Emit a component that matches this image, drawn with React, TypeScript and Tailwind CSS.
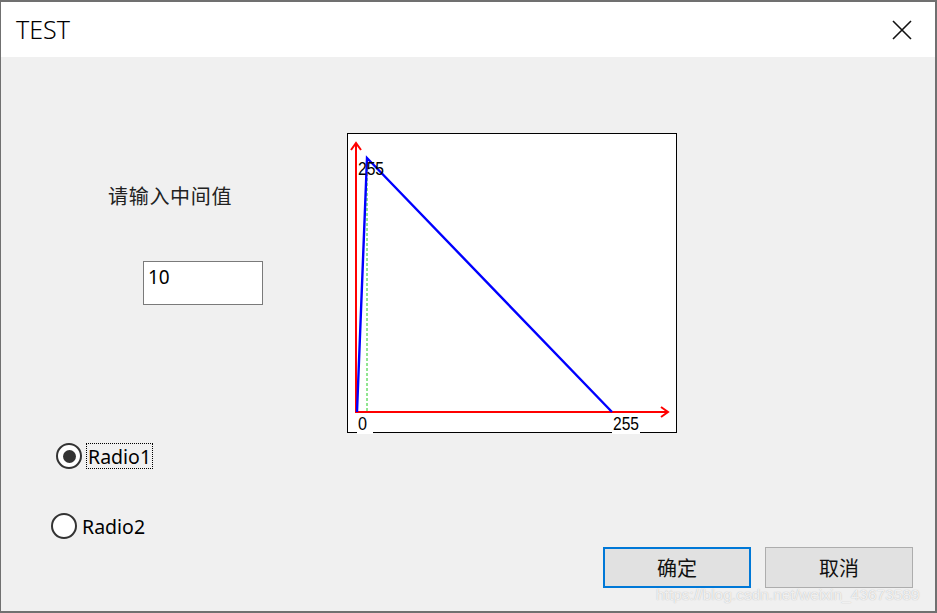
import React from 'react';

const cjk = { fontFamily: '"Noto Sans CJK SC", "Noto Sans", sans-serif' };
const ui = { fontFamily: '"Noto Sans", "Liberation Sans", sans-serif' };

function Chart() {
  const label = { fontFamily: '"Liberation Sans", Arial, sans-serif', fontSize: 18 };
  return (
    <div className="h-[300px] w-[330px] border border-black bg-white">
      <svg width="328" height="298" viewBox="0 0 328 298" className="overflow-visible">
        <line x1="19" y1="24" x2="19" y2="278" stroke="#22cc22" strokeWidth="1" strokeDasharray="3 2" />
        <line x1="8" y1="279" x2="8" y2="9" stroke="#ff0000" strokeWidth="2" />
        <polyline points="3,16 8,9 13,16" fill="none" stroke="#ff0000" strokeWidth="2" />
        <line x1="8" y1="278" x2="320" y2="278" stroke="#ff0000" strokeWidth="2" />
        <polyline points="313,273 320,278 313,283" fill="none" stroke="#ff0000" strokeWidth="2" />
        <polyline points="9,278 19,24 264,278" fill="none" stroke="#0000ff" strokeWidth="2.4" />
        <text x="10" y="41" style={label} textLength="26" lengthAdjust="spacingAndGlyphs">255</text>
        <rect x="9" y="283" width="16" height="17" fill="#fff" />
        <text x="10" y="296" style={label} textLength="9" lengthAdjust="spacingAndGlyphs">0</text>
        <rect x="264" y="283" width="28" height="17" fill="#fff" />
        <text x="265" y="296" style={label} textLength="26" lengthAdjust="spacingAndGlyphs">255</text>
      </svg>
    </div>
  );
}

export default function App() {
  return (
    <div className="relative flex h-[613px] w-[937px] flex-col overflow-hidden border-t-2 border-r-2 border-b-2 border-l border-[#707070] bg-[#f0f0f0]">
      <header className="flex h-[55px] shrink-0 items-center justify-between bg-white pl-[15px] pr-[23px]">
        <span className="text-[25px] font-light leading-none text-black" style={ui}>TEST</span>
        <svg width="20" height="20" viewBox="0 0 20 20">
          <path d="M1 1 L19 19 M19 1 L1 19" stroke="#111" strokeWidth="1.6" />
        </svg>
      </header>

      <div className="flex-1">
        <div className="mt-[76px] flex">
          <div className="w-[346px]">
            <div className="ml-[107px] mt-[53px] text-[20px] leading-[20px] tracking-[0.7px] text-[#222]" style={cjk}>
              请输入中间值
            </div>
            <div className="ml-[142px] mt-[55px] h-[44px] w-[120px] border border-[#7a7a7a] bg-white pl-[4px] pt-[4px] text-[19px] leading-[22px] text-black" style={ui}>
              10
            </div>
          </div>
          <Chart />
        </div>

        <div className="ml-[55px] mt-[10px] flex items-center">
          <div className="grid h-[26px] w-[26px] place-items-center rounded-full border-2 border-[#333] bg-white">
            <div className="h-[13px] w-[13px] rounded-full bg-[#333]" />
          </div>
          <div className="ml-[4px] flex h-[26px] items-center border border-dotted border-black px-[1px] pt-[2px] text-[19.5px] leading-none text-black" style={ui}>
            Radio1
          </div>
        </div>

        <div className="mt-[44px] flex items-start">
          <div className="ml-[50px] flex items-center">
            <div className="h-[26px] w-[26px] rounded-full border-2 border-[#333] bg-white" />
            <span className="ml-[5px] pt-[2px] text-[19.5px] leading-none text-black" style={ui}>Radio2</span>
          </div>
          <div className="ml-auto mr-[22px] mt-[34px] flex gap-[14px]">
            <button className="h-[41px] w-[148px] border-2 border-[#0078d7] bg-[#e1e1e1] text-[20px] text-[#111]" style={cjk}>
              确定
            </button>
            <button className="h-[41px] w-[148px] border border-[#adadad] bg-[#e1e1e1] text-[20px] text-[#111]" style={cjk}>
              取消
            </button>
          </div>
        </div>
      </div>

      <div
        className="absolute left-[655px] top-[583px] text-[15.5px] leading-[20px] text-white/80 [text-shadow:0_0_1px_rgba(120,120,120,0.6)]"
        style={{ fontFamily: '"Liberation Sans", Arial, sans-serif' }}
      >
        https://blog.csdn.net/weixin_43673589
      </div>
    </div>
  );
}
